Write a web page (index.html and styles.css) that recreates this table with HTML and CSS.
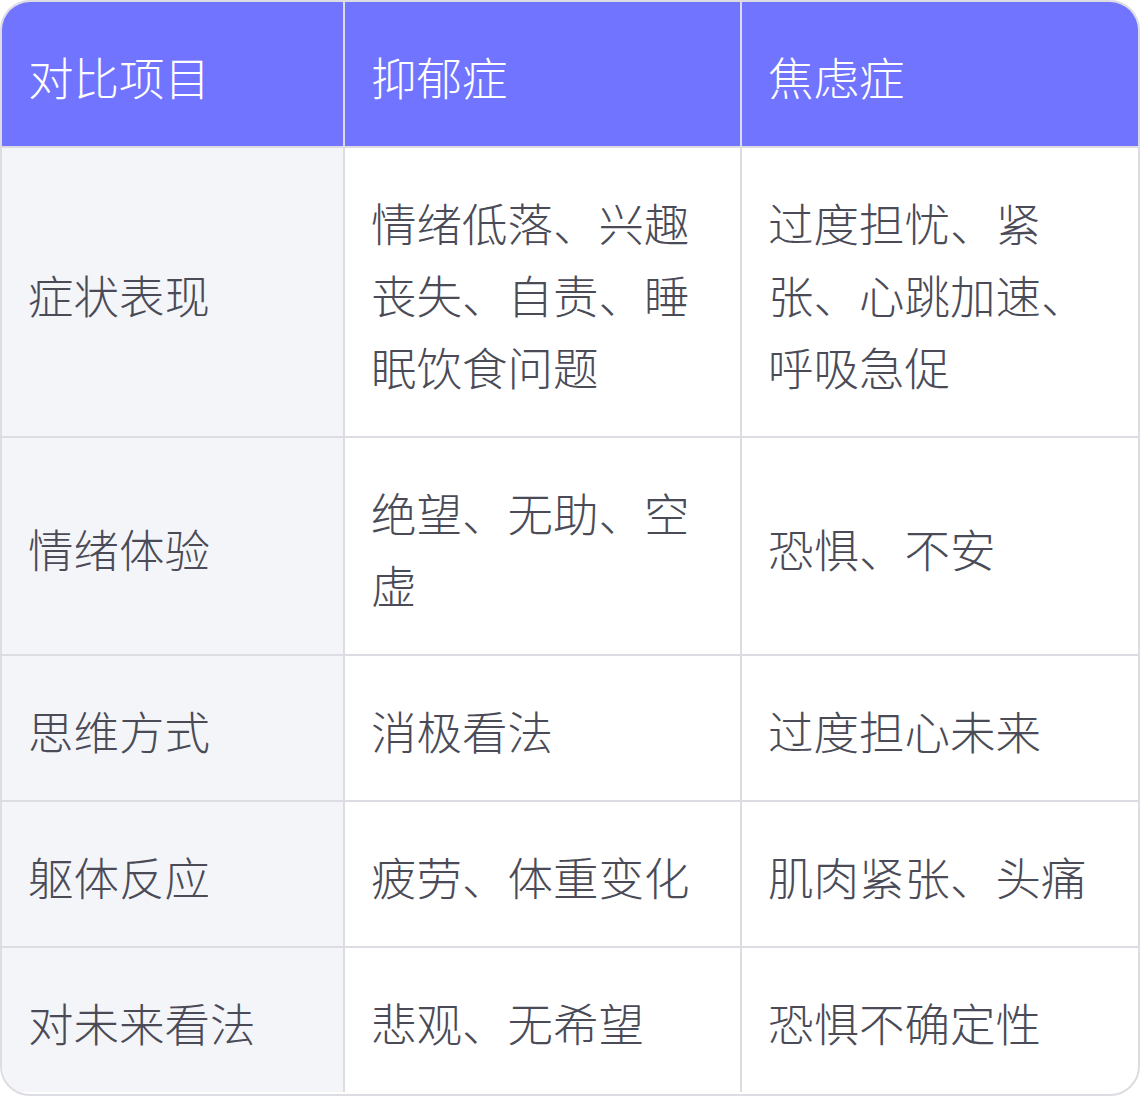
FILE: index.html
```html
<!DOCTYPE html>
<html lang="zh">
<head>
<meta charset="utf-8">
<link rel="stylesheet" href="styles.css">
</head>
<body>
<div class="wrap">
<table class="cmp">
<colgroup><col class="c1"><col class="c2"><col class="c3"></colgroup>
<thead>
<tr><th>对比项目</th><th>抑郁症</th><th>焦虑症</th></tr>
</thead>
<tbody>
<tr><td class="k">症状表现</td><td>情绪低落、兴趣丧失、自责、睡眠饮食问题</td><td>过度担忧、紧张、心跳加速、呼吸急促</td></tr>
<tr><td class="k">情绪体验</td><td>绝望、无助、空虚</td><td>恐惧、不安</td></tr>
<tr><td class="k">思维方式</td><td>消极看法</td><td>过度担心未来</td></tr>
<tr><td class="k">躯体反应</td><td>疲劳、体重变化</td><td>肌肉紧张、头痛</td></tr>
<tr><td class="k">对未来看法</td><td>悲观、无希望</td><td>恐惧不确定性</td></tr>
</tbody>
</table>
</div>
</body>
</html>
```
FILE: styles.css
```css
html, body { margin: 0; padding: 0; background: #ffffff; }
.wrap {
  width: 1140px;
  height: 1096px;
  box-sizing: border-box;
  border: 2px solid #dcdce2;
  border-radius: 30px;
  overflow: hidden;
  background: #fff;
}
.cmp {
  width: 100%;
  border-collapse: collapse;
  table-layout: fixed;
  font-family: "Noto Sans CJK SC", "Noto Sans", sans-serif;
  font-size: 45.5px;
  line-height: 72px;
  color: #4a4b57;
}
.c1 { width: 342px; }
.c2 { width: 397px; }
.c3 { width: auto; }
.cmp th, .cmp td {
  border: 2px solid #dcdce2;
  padding: 38px 24px 34px 26px;
  text-align: left;
  vertical-align: middle;
  font-weight: 300;
}
.cmp thead tr:first-child th { border-top: none; }
.cmp th:first-child, .cmp td:first-child { border-left: none; }
.cmp th:last-child, .cmp td:last-child { border-right: none; }
.cmp tbody tr:last-child td { border-bottom: none; }
.cmp th {
  background: #7074ff;
  color: #ffffff;
}
.cmp td.k { background: #f4f5f9; }
```
